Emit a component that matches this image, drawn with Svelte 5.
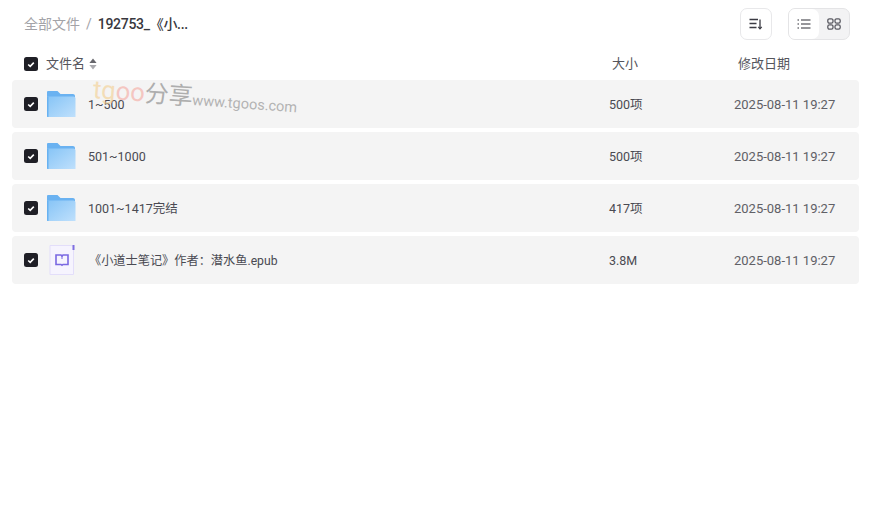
<script lang="ts">
  const rows = [
    { name: "1~500", size: "500项", type: "folder" },
    { name: "501~1000", size: "500项", type: "folder" },
    { name: "1001~1417完结", size: "417项", type: "folder" },
    { name: "《小道士笔记》作者：潜水鱼.epub", size: "3.8M", type: "epub" }
  ];
  const date = "2025-08-11 19:27";
</script>

<main class="page">
  <header class="top">
    <nav class="crumbs">
      <span class="root">全部文件</span>
      <span class="sep">/</span>
      <span class="current">192753_《小...</span>
    </nav>
    <div class="tools">
      <button class="tool sort" aria-label="排序">
        <svg width="14" height="12" viewBox="0 0 14 12" fill="none" stroke="#3a3a42" stroke-width="1.3">
          <path d="M0.5 1.5H9M0.5 5.5H7.5M0.5 9.5H7.5" />
          <path d="M11 1.5V10.5" />
          <path d="M9.3 8.8L11 10.8L12.7 8.8" />
        </svg>
      </button>
      <div class="switch">
        <button class="view on" aria-label="列表">
          <svg width="14" height="10" viewBox="0 0 14 10" fill="none" stroke="#2e2e36" stroke-width="1.2">
            <path d="M0.5 1H2M4 1H13.5M0.5 5H2M4 5H13.5M0.5 9H2M4 9H13.5" />
          </svg>
        </button>
        <button class="view" aria-label="宫格">
          <svg width="14" height="12" viewBox="0 0 14 12" fill="none" stroke="#5a5a62" stroke-width="1.3">
            <rect x="0.8" y="0.8" width="5.2" height="4.4" rx="1.6" />
            <rect x="8" y="0.8" width="5.2" height="4.4" rx="1.6" />
            <rect x="0.8" y="6.8" width="5.2" height="4.4" rx="1.6" />
            <rect x="8" y="6.8" width="5.2" height="4.4" rx="1.6" />
          </svg>
        </button>
      </div>
    </div>
  </header>

  <div class="head">
    <span class="check"><svg width="8" height="7" viewBox="0 0 10 8"><path d="M1.5 4L4 6.3L8.5 1.6" fill="none" stroke="#fff" stroke-width="2" /></svg></span>
    <span class="col-name">文件名</span>
    <svg class="sorter" width="8" height="12" viewBox="0 0 8 12">
      <path d="M4 0.5L7.6 5H0.4Z" fill="#66666c" />
      <path d="M4 11.5L7.6 7H0.4Z" fill="#a9a9ae" />
    </svg>
    <span class="col-size">大小</span>
    <span class="col-date">修改日期</span>
  </div>

  <div class="list">
    {#each rows as row}
      <div class="row">
        <span class="check"><svg width="8" height="7" viewBox="0 0 10 8"><path d="M1.5 4L4 6.3L8.5 1.6" fill="none" stroke="#fff" stroke-width="2" /></svg></span>
        {#if row.type === "folder"}
          <svg class="icon" width="30" height="28" viewBox="0 0 30 28">
            <defs>
              <linearGradient id="fg" x1="0" y1="0" x2="1" y2="1">
                <stop offset="0" stop-color="#86c4f6" />
                <stop offset="1" stop-color="#bfe0fc" />
              </linearGradient>
            </defs>
            <path d="M1 2.2C1 1.5 1.5 1 2.2 1H11.5L14.5 4H27C28.1 4 29 4.9 29 6V8H1Z" fill="#6ab2f1" />
            <path d="M1 6.5H27.5C28.6 6.5 29.5 7.4 29.5 8.5V27H2C1.4 27 1 26.6 1 26Z" fill="url(#fg)" />
            <path d="M1 6.5V26C1 26.6 1.4 27 2 27H2.5V7Z" fill="#68b2f1" />
          </svg>
        {:else}
          <svg class="icon epub" width="30" height="32" viewBox="0 0 30 32">
            <path d="M3 1.5H24.5V2H26.5V30.5H3Z" fill="#f6f4fe" stroke="#e3defa" />
            <rect x="25.5" y="1" width="2" height="5" fill="#7f6fe0" />
            <path d="M9 11H14L15 12L16 11H21V20.5H16L15 21.3L14 20.5H9Z" fill="none" stroke="#7a68e2" stroke-width="1.6" />
            <path d="M15 12V15" stroke="#7a68e2" stroke-width="1" />
          </svg>
        {/if}
        <span class="name" class:book={row.type === "epub"}>{row.name}</span>
        <span class="size">{row.size}</span>
        <span class="date">{date}</span>
      </div>
    {/each}
  </div>

  <div class="mark">
    <span class="tg">tg</span><span class="tg3">oo</span><span class="fx">分享</span>
    <span class="url">www.tgoos.com</span>
  </div>
</main>

<style>
  :global(body) {
    background: #fff;
    font-family: Roboto, "Noto Sans CJK SC", sans-serif;
    color: #27272e;
  }
  .page {
    position: relative;
    height: 514px;
    overflow: hidden;
    padding: 0 15px 0 12px;
    box-sizing: border-box;
  }
  .top {
    height: 48px;
    display: flex;
    align-items: center;
    justify-content: space-between;
    padding: 0 9px 0 12px;
  }
  .crumbs {
    display: flex;
    align-items: center;
    font-size: 14px;
    line-height: 20px;
  }
  .root { color: #a3a3a8; }
  .sep { color: #a3a3a8; margin: 0 6px; }
  .current { color: #38383e; font-weight: 500; letter-spacing: -0.3px; }
  .tools {
    display: flex;
    gap: 16px;
    align-items: center;
  }
  button {
    border: 0;
    padding: 0;
    background: none;
    display: flex;
    align-items: center;
    justify-content: center;
  }
  .tool {
    width: 32px;
    height: 32px;
    border: 1px solid #e8e8ea;
    border-radius: 7px;
    box-sizing: border-box;
  }
  .switch {
    display: flex;
    width: 62px;
    height: 32px;
    border: 1px solid #e4e4e6;
    border-radius: 7px;
    overflow: hidden;
    box-sizing: border-box;
    background: #f3f3f4;
  }
  .view { flex: 1; }
  .view.on {
    background: #fff;
    border-radius: 0 7px 7px 0;
  }
  .head {
    height: 32px;
    display: flex;
    align-items: center;
    padding-left: 12px;
    font-size: 13px;
    line-height: 20px;
    color: #55555c;
  }
  .check {
    flex: none;
    width: 14px;
    height: 14px;
    border-radius: 2.5px;
    background: #1f1f26;
    display: flex;
    align-items: center;
    justify-content: center;
  }
  .col-name { margin-left: 8px; }
  .sorter { margin-left: 4px; }
  .col-size { position: absolute; left: 612px; }
  .col-date { position: absolute; left: 738px; }
  .list {
    display: flex;
    flex-direction: column;
    gap: 4px;
  }
  .row {
    height: 48px;
    background: #f4f4f4;
    border-radius: 4px;
    display: flex;
    align-items: center;
    padding-left: 12px;
    font-size: 12.5px;
    line-height: 20px;
    color: #4a4a52;
  }
  .name, .size, .date { padding-top: 1px; }
  .icon { flex: none; margin-left: 8px; }
  .epub { margin-left: 9px; }
  .name { margin-left: 12px; flex: 1; }
  .name.book { font-size: 12.2px; }
  .size { width: 125px; }
  .date { width: 125px; color: #606066; font-size: 13px; }
  .mark {
    position: absolute;
    left: 93px;
    top: 74px;
    display: flex;
    align-items: baseline;
    pointer-events: none;
    transform: rotate(4deg);
    transform-origin: left center;
    font-size: 25.5px;
    line-height: 30px;
    opacity: 0.6;
    white-space: nowrap;
  }
  .tg { color: #f3cf8f; }
  .tg3 { color: #f5a9a0; }
  .fx { color: #808080; font-size: 24px; }
  .url { color: #888; font-size: 14.5px; }
</style>
